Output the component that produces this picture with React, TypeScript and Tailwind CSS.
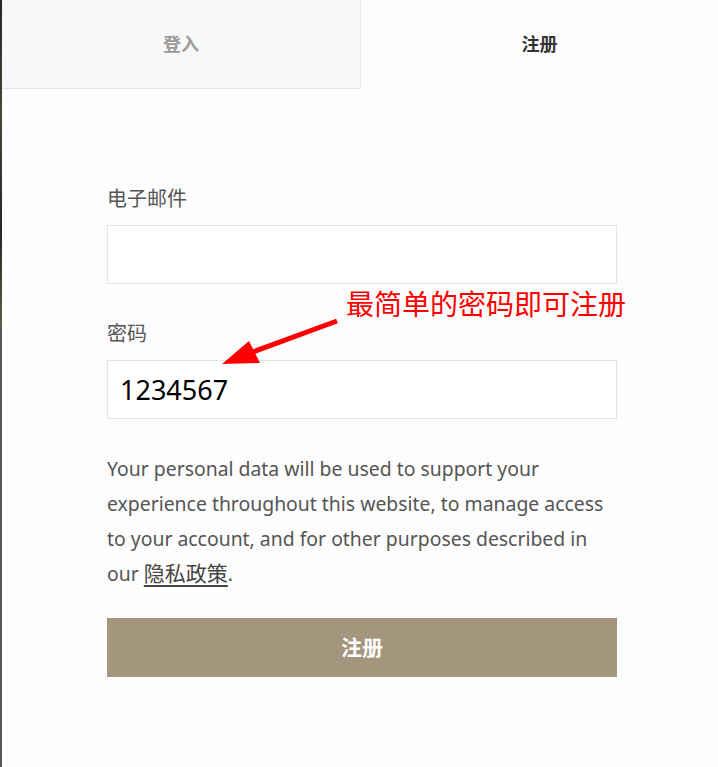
import React from "react";

const font = { fontFamily: '"Noto Sans", "Noto Sans CJK SC", sans-serif' };

function Field({ label, value }: { label: string; value?: string }) {
  return (
    <div className="flex flex-col">
      <label className="text-[20px] leading-[27px] text-[#555]">{label}</label>
      <div className="mt-[13px] h-[59px] border border-[#e3e3e6] bg-white px-[12px] flex items-center">
        <span className="text-[27px] text-black leading-none">{value}</span>
      </div>
    </div>
  );
}

export default function App() {
  return (
    <div className="relative flex w-[718px] h-[767px] bg-white overflow-hidden" style={font}>
      <div className="w-[2px] h-full bg-[linear-gradient(to_bottom,#2b2520_0%,#4a463c_15%,#2a2420_30%,#5d5b48_42%,#57575b_43%,#57575b_100%)]" />
      <div className="flex-1 flex flex-col bg-[#fdfdfd] rounded-tl-[3px]">
        <div className="flex h-[89px]">
          <div className="w-[359px] flex items-center justify-center bg-[#f8f8f8] border-r border-b border-[#e8e8e8] text-[18px] font-bold text-[#9a9a9a]">
            登入
          </div>
          <div className="flex-1 flex items-center justify-center text-[18px] font-bold text-[#333]">
            注册
          </div>
        </div>
        <div className="pl-[105px] w-[615px] pt-[96px] flex flex-col">
          <Field label="电子邮件" />
          <div className="mt-[36px]">
            <Field label="密码" value="1234567" />
          </div>
          <p className="mt-[32px] text-[19.4px] leading-[35px] text-[#555]">
            Your personal data will be used to support your experience throughout this website, to manage access to your account, and for other purposes described in our{" "}
            <a className="text-[21px] underline underline-offset-[4px] text-[#444]">隐私政策</a>.
          </p>
          <button className="mt-[27px] h-[59px] w-full bg-[#a4967c] text-white text-[21px] font-bold">
            注册
          </button>
        </div>
      </div>
      <span className="absolute left-[346px] top-[286px] text-[28px] leading-[36px] text-[#ff0000]">
        最简单的密码即可注册
      </span>
      <svg className="absolute left-0 top-0" width="718" height="767">
        <line x1="337" y1="321" x2="250" y2="353" stroke="#ff0000" strokeWidth="5" />
        <polygon points="222,364 249,341 260,363" fill="#ff0000" />
      </svg>
    </div>
  );
}
